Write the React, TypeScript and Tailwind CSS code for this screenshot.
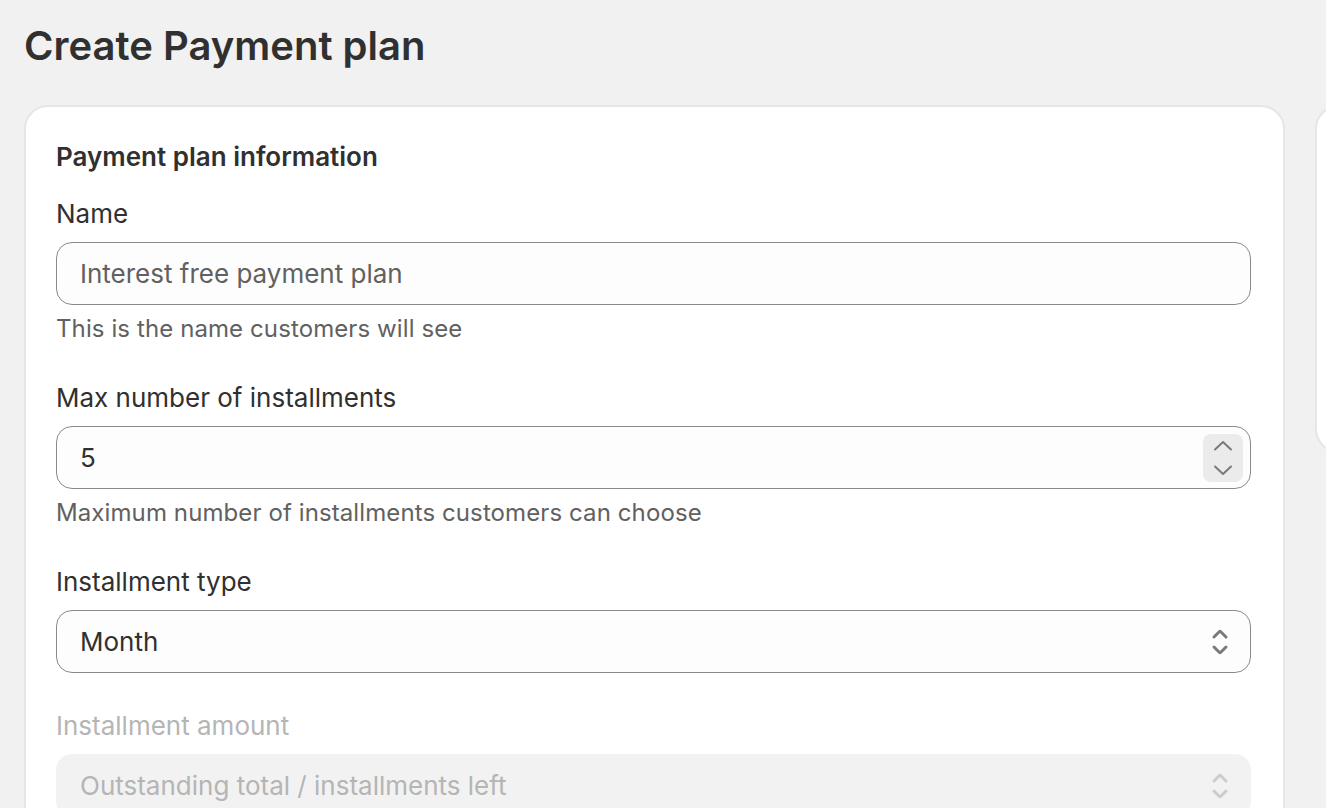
function SelectIcon({ color }: { color: string }) {
  return (
    <svg width="40" height="40" viewBox="0 0 20 20" fill={color}>
      <path d="M10.884 4.323a1.25 1.25 0 0 0-1.768 0l-2.646 2.647a.75.75 0 0 0 1.06 1.06l2.47-2.47 2.47 2.47a.75.75 0 1 0 1.06-1.06l-2.646-2.647Z" />
      <path d="m13.53 13.03-2.646 2.647a1.25 1.25 0 0 1-1.768 0l-2.646-2.647a.75.75 0 0 1 1.06-1.06l2.47 2.47 2.47-2.47a.75.75 0 0 1 1.06 1.06Z" />
    </svg>
  );
}

function Stepper() {
  return (
    <div className="flex h-[48px] w-[40px] shrink-0 items-center justify-center rounded-[8px] bg-[#ebebeb]">
      <svg width="40" height="48" viewBox="0 0 40 48" fill="none" stroke="#7a7a7a" strokeWidth="2" strokeLinecap="round" strokeLinejoin="round">
        <polyline points="12,15.5 20,8 28,15.5" />
        <polyline points="12,32.5 20,40 28,32.5" />
      </svg>
    </div>
  );
}

interface FieldProps {
  label: string;
  help?: string;
  disabled?: boolean;
  children: React.ReactNode;
  first?: boolean;
}

function Field({ label, help, disabled, children, first }: FieldProps) {
  return (
    <div className={first ? "mt-[17px]" : "mt-[33px]"}>
      <div className={`text-[26px] leading-[40px] ${disabled ? "text-[#b5b5b5]" : "text-[#303030]"}`}>
        {label}
      </div>
      <div className="mt-2">{children}</div>
      {help && (
        <div className="mt-2 text-[24px] leading-[32px] tracking-[0.1px] text-[#616161]">{help}</div>
      )}
    </div>
  );
}

export default function App() {
  return (
    <div className="h-[808px] w-full overflow-hidden bg-[#f1f1f1] px-6 font-['Inter',sans-serif] text-[#303030]">
      <h1 className="pt-[22px] text-[40px] font-semibold leading-[48px]">
        Create Payment plan
      </h1>

      <div className="mt-[35px] flex gap-[30px]">
        <div className="w-[1261px] shrink-0 rounded-[24px] border-2 border-[#e6e6e6] bg-white pl-[30px] pr-[32px] pt-[30px] pb-8">
          <h2 className="text-[26px] font-semibold leading-[40px]">Payment plan information</h2>

          <Field label="Name" help="This is the name customers will see" first>
            <div className="flex h-[63px] items-center rounded-[16px] border-[1.5px] border-[#8a8a8a] bg-[#fdfdfd] px-[23px] text-[26px] text-[#616161]">
              Interest free payment plan
            </div>
          </Field>

          <Field label="Max number of installments" help="Maximum number of installments customers can choose">
            <div className="flex h-[63px] items-center justify-between rounded-[16px] border-[1.5px] border-[#8a8a8a] bg-[#fdfdfd] pl-[23px] pr-[7px] text-[26px] text-[#303030]">
              <span>5</span>
              <Stepper />
            </div>
          </Field>

          <Field label="Installment type">
            <div className="flex h-[63px] items-center justify-between rounded-[16px] border-[1.5px] border-[#8a8a8a] bg-[#fdfdfd] pl-[23px] pr-[10px] text-[26px] text-[#303030]">
              <span>Month</span>
              <SelectIcon color="#7a7a7a" />
            </div>
          </Field>

          <Field label="Installment amount" disabled>
            <div className="flex h-[63px] items-center justify-between rounded-[16px] border-[1.5px] border-transparent bg-[#f2f2f2] pl-[23px] pr-[10px] text-[26px] text-[#b5b5b5]">
              <span>Outstanding total / installments left</span>
              <SelectIcon color="#cccccc" />
            </div>
          </Field>
        </div>

        <div className="h-[348px] w-[400px] shrink-0 rounded-[24px] border-2 border-[#e6e6e6] bg-white" />
      </div>
    </div>
  );
}
